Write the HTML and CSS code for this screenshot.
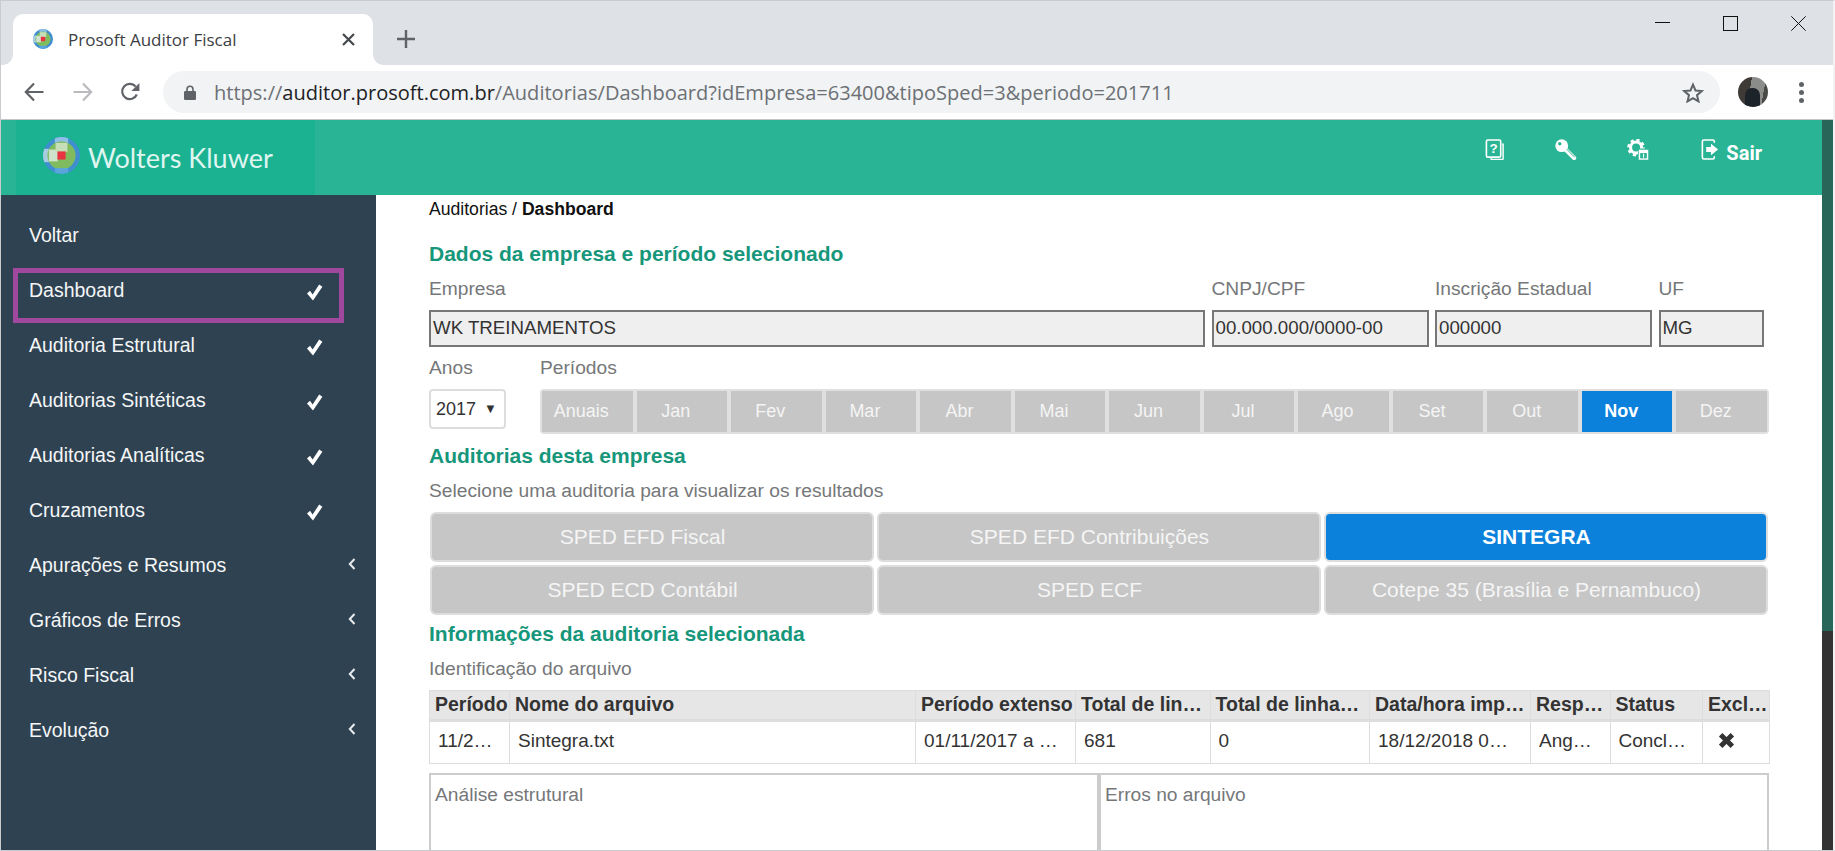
FILE: index.html
```html
<!DOCTYPE html>
<html>
<head>
  <meta charset="utf-8">
  <title>Prosoft Auditor Fiscal</title>
  <link rel="stylesheet" href="styles.css">
</head>
<body>
  <svg class="defs" width="0" height="0">
    <defs>
      <clipPath id="globeClip"><circle cx="25" cy="25" r="25"/></clipPath>
      <symbol id="globe" viewBox="0 0 50 50">
        <g clip-path="url(#globeClip)">
          <rect width="50" height="50" fill="#3f8fd0"/>
          <rect x="16" y="0" width="18" height="8" fill="#8fbfe4"/>
          <rect x="0" y="16" width="8" height="18" fill="#a9cde0"/>
          <circle cx="25" cy="25" r="19" fill="#80bc5f"/>
          <rect x="8" y="17" width="12" height="16" fill="#cfe3cc"/>
          <rect x="17" y="8" width="16" height="12" fill="#c6dfb8"/>
          <rect x="16" y="42" width="18" height="8" fill="#5aa6dc"/>
          <rect x="19.5" y="19.5" width="11" height="11" fill="#ea3340"/>
        </g>
      </symbol>
      <symbol id="check" viewBox="0 0 17 17">
        <path d="M1 9.5 4 6.8 6.6 10.4 13.2.6 16.4 2.8 7 16.6Z" fill="#fff"/>
      </symbol>
      <symbol id="chevron" viewBox="0 0 8 12">
        <path d="M6.5 1 1.8 6l4.7 5" fill="none" stroke="#e8ecef" stroke-width="2"/>
      </symbol>
    </defs>
  </svg>

  <div class="window">
    <div class="tabstrip">
      <div class="tab">
        <svg class="favicon"><use href="#globe"/></svg>
        <span class="tab-title">Prosoft Auditor Fiscal</span>
        <svg class="tab-close" viewBox="0 0 13 13"><path d="M1 1l11 11M12 1 1 12" stroke="#45484c" stroke-width="2.2"/></svg>
      </div>
      <svg class="new-tab" viewBox="0 0 18 18"><path d="M9 0v18M0 9h18" stroke="#5f6368" stroke-width="2.4"/></svg>
      <div class="win-controls">
        <svg viewBox="0 0 15 15"><path d="M0 6.5h15" stroke="#111" stroke-width="1"/></svg>
        <svg viewBox="0 0 15 15"><rect x=".5" y=".5" width="14" height="14" fill="none" stroke="#111"/></svg>
        <svg viewBox="0 0 15 15"><path d="M.3.3l14.4 14.4M14.7.3.3 14.7" stroke="#111" stroke-width="1"/></svg>
      </div>
    </div>

    <div class="toolbar">
      <svg class="nav-icon" viewBox="0 0 20 20"><path d="M19.5 10H2M10 1.5 1.8 10l8.2 8.5" fill="none" stroke="#5f6368" stroke-width="2.2"/></svg>
      <svg class="nav-icon forward" viewBox="0 0 20 20"><path d="M.5 10H18M10 1.5l8.2 8.5-8.2 8.5" fill="none" stroke="#b9bbbe" stroke-width="2.2"/></svg>
      <svg class="nav-icon reload" viewBox="0 0 20 20"><path d="M16.8 12.5A7.6 7.6 0 1 1 15.6 4.6" fill="none" stroke="#5f6368" stroke-width="2.2"/><path d="M19.4 1v8h-8z" fill="#5f6368"/></svg>
      <div class="omnibox">
        <svg class="lock" viewBox="0 0 12 15"><path d="M3 6V4.2a3 3 0 0 1 6 0V6" fill="none" stroke="#5f6368" stroke-width="1.6"/><rect y="6" width="12" height="9" rx="1.2" fill="#5f6368"/></svg>
        <span class="url">https://<b>auditor.prosoft.com.br</b>/Auditorias/Dashboard?idEmpresa=63400&amp;tipoSped=3&amp;periodo=201711</span>
        <svg class="star" viewBox="0 0 22 21"><path d="M11 2.6l2.5 5.9 6.3.5-4.8 4.2 1.5 6.2L11 16.1l-5.5 3.3 1.5-6.2L2.2 9l6.3-.5z" fill="none" stroke="#5f6368" stroke-width="2"/></svg>
      </div>
      <div class="avatar"><span class="avatar-figure"></span></div>
      <div class="kebab"><i></i><i></i><i></i></div>
    </div>

    <div class="app">
      <div class="app-main">
        <header class="topbar">
          <div class="brand">
            <svg class="brand-globe"><use href="#globe"/></svg>
            <span class="brand-name">Wolters Kluwer</span>
          </div>
          <nav class="top-actions">
            <svg class="top-icon" viewBox="0 0 20 22">
              <path d="M17.5 5.5h1v15a1 1 0 0 1-1 1H6V20" fill="none" stroke="#fff" stroke-width="1.5"/>
              <rect x="1" y="1" width="15" height="18" rx="1.5" fill="none" stroke="#fff" stroke-width="1.7"/>
              <text x="8.5" y="15" class="help-mark">?</text>
            </svg>
            <svg class="top-icon" viewBox="0 0 23 22">
              <circle cx="7" cy="7" r="6.7" fill="#fff"/>
              <circle cx="5" cy="5" r="1.8" fill="#29b496"/>
              <path d="M11 11l9 9" stroke="#fff" stroke-width="4.4" stroke-linecap="round"/>
              <path d="M12 10.5l8.5 8.5" stroke="#29b496" stroke-width="1"/>
            </svg>
            <svg class="top-icon" viewBox="0 0 22 22">
              <circle cx="9" cy="9" r="5.8" fill="none" stroke="#fff" stroke-width="3.2"/>
              <circle cx="9" cy="9" r="8" fill="none" stroke="#fff" stroke-width="2.6" stroke-dasharray="3.3 3"/>
              <rect x="11" y="10" width="11" height="12" fill="#29b496"/>
              <rect x="12.5" y="12" width="8.5" height="9" fill="none" stroke="#fff" stroke-width="1.5"/>
              <path d="M12.5 13.5H21" stroke="#fff" stroke-width="2.5"/>
              <path d="M16.8 15.5v4" stroke="#fff" stroke-width="1.2"/>
            </svg>
            <a class="logout">
              <svg class="logout-icon" viewBox="0 0 18 22">
                <path d="M13.5 4V2.5A1.5 1.5 0 0 0 12 1H2.500A1.500 1.500 0 0 0 1 2.500v17A1.500 1.500 0 0 0 2.500 21H12a1.500 1.500 0 0 0 1.500-1.500V18" fill="none" stroke="#fff" stroke-width="1.7"/>
                <path d="M5 8.5h5V5l7.500 6-7.500 6v-3.500H5z" fill="#fff"/>
              </svg>
              <span>Sair</span>
            </a>
          </nav>
        </header>

        <div class="body-row">
          <aside class="sidebar">
            <div class="side-item">Voltar</div>
            <div class="side-item side-selected">Dashboard<svg class="side-check"><use href="#check"/></svg></div>
            <div class="side-item">Auditoria Estrutural<svg class="side-check"><use href="#check"/></svg></div>
            <div class="side-item">Auditorias Sintéticas<svg class="side-check"><use href="#check"/></svg></div>
            <div class="side-item">Auditorias Analíticas<svg class="side-check"><use href="#check"/></svg></div>
            <div class="side-item">Cruzamentos<svg class="side-check"><use href="#check"/></svg></div>
            <div class="side-item">Apurações e Resumos<svg class="side-chevron"><use href="#chevron"/></svg></div>
            <div class="side-item">Gráficos de Erros<svg class="side-chevron"><use href="#chevron"/></svg></div>
            <div class="side-item">Risco Fiscal<svg class="side-chevron"><use href="#chevron"/></svg></div>
            <div class="side-item">Evolução<svg class="side-chevron"><use href="#chevron"/></svg></div>
          </aside>

          <main class="content">
            <div class="breadcrumb">Auditorias / <b>Dashboard</b></div>

            <h2 class="section-title first">Dados da empresa e período selecionado</h2>
            <div class="fields">
              <label>Empresa</label>
              <label>CNPJ/CPF</label>
              <label>Inscrição Estadual</label>
              <label>UF</label>
              <div class="field">WK TREINAMENTOS</div>
              <div class="field">00.000.000/0000-00</div>
              <div class="field">000000</div>
              <div class="field">MG</div>
            </div>

            <div class="period-row">
              <div class="years">
                <label>Anos</label>
                <div class="year-select">2017 <span class="caret">▼</span></div>
              </div>
              <div class="periods">
                <label>Períodos</label>
                <div class="month-bar">
                  <span>Anuais</span><span>Jan</span><span>Fev</span><span>Mar</span><span>Abr</span><span>Mai</span><span>Jun</span><span>Jul</span><span>Ago</span><span>Set</span><span>Out</span><span class="active">Nov</span><span>Dez</span>
                </div>
              </div>
            </div>

            <h2 class="section-title second">Auditorias desta empresa</h2>
            <p class="hint">Selecione uma auditoria para visualizar os resultados</p>
            <div class="audit-grid">
              <button>SPED EFD Fiscal</button>
              <button>SPED EFD Contribuições</button>
              <button class="active">SINTEGRA</button>
              <button>SPED ECD Contábil</button>
              <button>SPED ECF</button>
              <button>Cotepe 35 (Brasília e Pernambuco)</button>
            </div>

            <h2 class="section-title third">Informações da auditoria selecionada</h2>
            <p class="hint file-hint">Identificação do arquivo</p>
            <table class="files">
              <colgroup>
                <col class="c-period"><col class="c-name"><col class="c-range"><col class="c-total"><col class="c-lines"><col class="c-date"><col class="c-resp"><col class="c-status"><col class="c-del">
              </colgroup>
              <thead>
                <tr>
                  <th>Período</th><th>Nome do arquivo</th><th>Período extenso</th><th>Total de lin…</th><th>Total de linha…</th><th>Data/hora imp…</th><th>Resp…</th><th>Status</th><th>Excl…</th>
                </tr>
              </thead>
              <tbody>
                <tr>
                  <td>11/2…</td><td>Sintegra.txt</td><td>01/11/2017 a …</td><td>681</td><td>0</td><td>18/12/2018 0…</td><td>Ang…</td><td>Concl…</td>
                  <td><svg class="del" viewBox="0 0 16 16"><path d="M2.5 2.5l11 11M13.5 2.5l-11 11" stroke="#333" stroke-width="4.6"/></svg></td>
                </tr>
              </tbody>
            </table>

            <div class="panels">
              <section class="panel">Análise estrutural</section>
              <section class="panel">Erros no arquivo</section>
            </div>
          </main>
        </div>
      </div>
      <div class="scrollbar"><div class="scroll-thumb"></div></div>
    </div>
  </div>
</body>
</html>
```

FILE: styles.css
```css
html, body {
  margin: 0;
  padding: 0;
}

body {
  width: 1835px;
  height: 851px;
  overflow: hidden;
  background: #fff;
  font-family: "Liberation Sans", Arial, sans-serif;
  font-size: 19.2px;
  color: #757779;
}

.defs {
  position: absolute;
}

.window {
  height: 851px;
  box-sizing: border-box;
  border-top: 1px solid #c9cbce;
  border-left: 1px solid #c9cbce;
  border-bottom: 1px solid #c9cbce;
  border-right: 2px solid #f2f2f2;
  display: flex;
  flex-direction: column;
}

/* browser chrome */
.tabstrip {
  height: 64px;
  background: #dee1e6;
  display: flex;
  align-items: flex-end;
  padding-left: 12px;
}

.tab {
  position: relative;
  width: 360px;
  height: 51px;
  box-sizing: border-box;
  background: #fff;
  border-radius: 10px 10px 0 0;
  display: flex;
  align-items: center;
  padding: 0 18px 1px 20px;
}

.tab::before, .tab::after {
  content: "";
  position: absolute;
  bottom: 0;
  width: 10px;
  height: 10px;
}

.tab::before {
  left: -10px;
  background: radial-gradient(circle at 0 0, #dee1e6 9.5px, #fff 10px);
}

.tab::after {
  right: -10px;
  background: radial-gradient(circle at 100% 0, #dee1e6 9.5px, #fff 10px);
}

.favicon {
  width: 20px;
  height: 20px;
  margin-right: 15px;
}

.tab-title {
  flex: 1;
  font-family: "Open Sans", sans-serif;
  font-size: 17px;
  color: #3c4043;
}

.tab-close {
  width: 13px;
  height: 13px;
}

.new-tab {
  width: 18px;
  height: 18px;
  margin: 0 0 17px 24px;
}

.win-controls {
  margin-left: auto;
  align-self: flex-start;
  padding-top: 15px;
  display: flex;
  gap: 53px;
  padding-right: 27px;
}

.win-controls svg {
  width: 15px;
  height: 15px;
}

.toolbar {
  height: 54px;
  flex: none;
  box-sizing: content-box;
  background: #fff;
  border-bottom: 1px solid #c3c5c8;
  display: flex;
  align-items: center;
  padding-left: 23px;
}

.nav-icon {
  width: 20px;
  height: 20px;
  margin-right: 29px;
}

.nav-icon.forward {
  margin-right: 27px;
}

.nav-icon.reload {
  margin-right: 23px;
}

.omnibox {
  width: 1557px;
  height: 42px;
  box-sizing: border-box;
  border-radius: 21px;
  background: #f1f3f4;
  display: flex;
  align-items: center;
  padding: 0 16px 0 21px;
}

.lock {
  width: 12px;
  height: 15px;
  margin-right: 18px;
}

.url {
  flex: 1;
  font-family: "Open Sans", sans-serif;
  font-size: 20.05px;
  color: #6c7075;
  white-space: nowrap;
}

.url b {
  font-weight: 400;
  color: #202124;
}

.star {
  width: 22px;
  height: 21px;
}

.avatar {
  width: 30px;
  height: 30px;
  margin-left: 18px;
  border-radius: 50%;
  overflow: hidden;
  background: linear-gradient(100deg, #3e3a36 0 40%, #8b8d8a 40% 80%, #4a4a46 80%);
  position: relative;
}

.avatar-figure {
  position: absolute;
  left: 7px;
  top: 11px;
  width: 15px;
  height: 20px;
  border-radius: 7px 7px 0 0;
  background: #1c2329;
}

.kebab {
  margin-left: 31px;
  display: flex;
  flex-direction: column;
  gap: 3px;
}

.kebab i {
  width: 5px;
  height: 5px;
  border-radius: 50%;
  background: #5f6368;
}

/* app */
.app {
  flex: 1;
  min-height: 0;
  display: flex;
}

.app-main {
  flex: 1;
  min-width: 0;
  display: flex;
  flex-direction: column;
}

.scrollbar {
  width: 11px;
  background: #333;
}

.scroll-thumb {
  height: 511px;
  background: #29665a;
}

.topbar {
  height: 75px;
  flex: none;
  background: #29b496;
  display: flex;
}

.brand {
  width: 299px;
  margin-left: 15px;
  background: #1bb292;
  display: flex;
  align-items: center;
  padding-bottom: 4px;
  box-sizing: border-box;
  padding-left: 27px;
}

.brand-globe {
  width: 37px;
  height: 37px;
  filter: blur(.6px);
  margin-right: 8px;
}

.brand-name {
  font-family: Lato, sans-serif;
  font-size: 27px;
  color: #dff5ef;
  margin-top: 3px;
}

.top-actions {
  margin-left: auto;
  display: flex;
  align-items: flex-start;
  padding-top: 19px;
}

.top-icon {
  height: 21px;
  width: 22px;
  margin-right: 50px;
}

.top-icon:first-child {
  margin-right: 49px;
}

.help-mark {
  font-family: "Liberation Sans", sans-serif;
  font-size: 14px;
  font-weight: 700;
  fill: #fff;
  text-anchor: middle;
}

.logout {
  display: flex;
  align-items: flex-start;
  color: #fff;
  font-family: Roboto, sans-serif;
  font-weight: 700;
  font-size: 20px;
  margin-right: 60px;
  margin-left: 2px;
}

.logout span {
  margin-top: 2px;
}

.logout-icon {
  width: 18px;
  height: 21px;
  margin-right: 7px;
}

.body-row {
  flex: 1;
  min-height: 0;
  display: flex;
}

/* sidebar */
.sidebar {
  width: 375px;
  flex: none;
  box-sizing: border-box;
  background: #2f4251;
  padding-top: 13px;
  color: #f4f6f7;
  font-size: 19.5px;
}

.side-item {
  position: relative;
  height: 55px;
  line-height: 54px;
  padding-left: 28px;
}

.side-selected::before {
  content: "";
  position: absolute;
  left: 12px;
  top: 5px;
  width: 331px;
  height: 55px;
  box-sizing: border-box;
  border: 5px solid #a0479e;
}

.side-check {
  position: absolute;
  left: 305px;
  top: 21px;
  width: 17px;
  height: 17px;
}

.side-chevron {
  position: absolute;
  left: 347px;
  top: 20px;
  width: 8px;
  height: 12px;
}

/* main column */
.content {
  flex: 1;
  min-width: 0;
  height: 100%;
  overflow: hidden;
  box-sizing: border-box;
  padding: 4px 53px 0;
}

.breadcrumb {
  font-size: 17.6px;
  line-height: 20px;
  color: #111;
}

.section-title {
  margin: 0;
  font-size: 21px;
  line-height: 22px;
  font-weight: 700;
  color: #16967a;
}

.section-title.first { margin-top: 24px; }
.section-title.second { margin-top: 11px; }
.section-title.third { margin-top: 8px; }

label {
  display: block;
  line-height: 20px;
}

.fields {
  margin-top: 14px;
  display: grid;
  grid-template-columns: 776px 217px 217px 105px;
  column-gap: 6.5px;
  row-gap: 11px;
}

.field {
  height: 37px;
  box-sizing: border-box;
  border: 2px solid #777;
  background: #efefef;
  color: #333;
  padding: 0 2px;
  font-size: 18.7px;
  line-height: 31px;
}

.period-row {
  margin-top: 11px;
  display: flex;
}

.years {
  width: 111px;
  flex: none;
}

.year-select {
  margin-top: 11px;
  width: 77px;
  height: 40px;
  box-sizing: border-box;
  border: 2px solid #ddd;
  border-radius: 4px;
  padding-left: 5px;
  font-size: 18px;
  line-height: 36px;
  color: #333;
}

.caret {
  font-size: 13px;
  margin-left: 3px;
  position: relative;
  top: -2px;
}

.periods {
  flex: 1;
  min-width: 0;
}

.month-bar {
  margin-top: 11px;
  box-sizing: border-box;
  width: 1229px;
  height: 45px;
  border: 2px solid #e0e0e0;
  border-radius: 4px;
  background: #e0e0e0;
  display: grid;
  grid-template-columns: repeat(13, 1fr);
  column-gap: 4px;
}

.month-bar span {
  background: #c6c6c6;
  color: #f5f5f5;
  text-align: center;
  padding-right: 12px;
  font-size: 18px;
  line-height: 41px;
}

.month-bar .active {
  background: #0b81dc;
  color: #fff;
  font-weight: 700;
}

.hint {
  margin: 14px 0 0;
  line-height: 20px;
}

.audit-grid {
  margin-top: 11px;
  margin-left: 1px;
  width: 1338px;
  display: grid;
  grid-template-columns: repeat(3, 1fr);
  gap: 3px 3px;
}

.audit-grid button {
  height: 50px;
  border: 2px solid #ddd;
  border-radius: 6px;
  background: #c6c6c6;
  color: #f5f5f5;
  font-family: "Liberation Sans", sans-serif;
  font-size: 21px;
  padding: 0 19px 0 0;
}

.audit-grid .active {
  background: #0b81dc;
  color: #fff;
  font-weight: 700;
}

.file-hint {
  margin-top: 14px;
}

.files {
  margin-top: 11px;
  width: 1340px;
  table-layout: fixed;
  border-collapse: collapse;
  color: #333;
}

.c-period { width: 80px; }
.c-name { width: 406px; }
.c-range { width: 160px; }
.c-total { width: 134.5px; }
.c-lines { width: 159.5px; }
.c-date { width: 161px; }
.c-resp { width: 79.5px; }
.c-status { width: 92.5px; }
.c-del { width: 67px; }

.files th, .files td {
  border: 1px solid #ddd;
  white-space: nowrap;
  overflow: hidden;
  text-align: left;
}

.files th {
  height: 30px;
  padding: 0 0 2px 5px;
  background: #e6e6e6;
  border-bottom: 3px solid #ddd;
  box-sizing: border-box;
  font-size: 19.5px;
}

.files td {
  height: 43px;
  box-sizing: border-box;
  padding: 0 0 4px 8px;
  font-size: 19px;
}

.del {
  display: block;
  width: 17px;
  height: 17px;
  margin-left: 7px;
}

.panels {
  margin-top: 9px;
  width: 1340px;
  display: grid;
  grid-template-columns: 1fr 1fr;
}

.panel {
  height: 90px;
  box-sizing: border-box;
  border: 2px solid #ccc;
  padding: 10px 4px;
  line-height: 20px;
}
```
